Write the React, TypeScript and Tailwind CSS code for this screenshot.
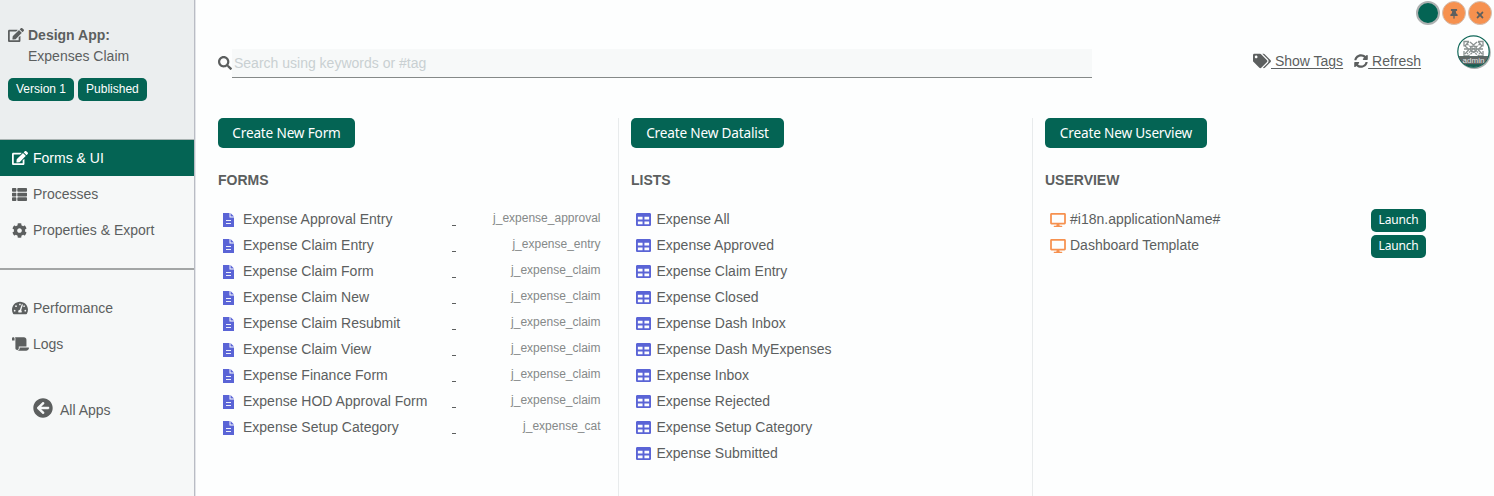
import type { ReactNode } from "react";
import {
  FaArrowCircleLeft,
  FaCog,
  FaDesktop,
  FaEdit,
  FaScroll,
  FaSearch,
  FaSyncAlt,
  FaTable,
  FaTachometerAlt,
  FaTags,
  FaThList,
  FaThumbtack,
  FaTimes,
} from "react-icons/fa";

const forms = [
  ["Expense Approval Entry", "j_expense_approval"],
  ["Expense Claim Entry", "j_expense_entry"],
  ["Expense Claim Form", "j_expense_claim"],
  ["Expense Claim New", "j_expense_claim"],
  ["Expense Claim Resubmit", "j_expense_claim"],
  ["Expense Claim View", "j_expense_claim"],
  ["Expense Finance Form", "j_expense_claim"],
  ["Expense HOD Approval Form", "j_expense_claim"],
  ["Expense Setup Category", "j_expense_cat"],
];

const lists = [
  "Expense All",
  "Expense Approved",
  "Expense Claim Entry",
  "Expense Closed",
  "Expense Dash Inbox",
  "Expense Dash MyExpenses",
  "Expense Inbox",
  "Expense Rejected",
  "Expense Setup Category",
  "Expense Submitted",
];

const userviews = ["#i18n.applicationName#", "Dashboard Template"];

function Badge({ children }: { children: ReactNode }) {
  return (
    <span className="flex h-[23px] items-center rounded-[5px] bg-[#046454] px-2 pb-px text-xs text-white">
      {children}
    </span>
  );
}

function NavItem({ icon, label, active = false }: { icon: ReactNode; label: string; active?: boolean }) {
  return (
    <a
      className={
        active
          ? "flex h-9 items-center bg-[#046454] pl-[11px] text-white"
          : "flex h-9 items-center pl-[11px]"
      }
    >
      <span className="flex w-[22px] items-center pl-px text-[15px]">{icon}</span>
      {label}
    </a>
  );
}

function CreateButton({ label, width }: { label: string; width: string }) {
  return (
    <button
      className={`${width} flex h-[30px] items-center justify-center rounded-[5px] bg-[#046454] font-['Noto_Sans',sans-serif] text-[13.6px] tracking-[-0.17px] whitespace-nowrap text-white`}
    >
      {label}
    </button>
  );
}

function Heading({ children }: { children: ReactNode }) {
  return <h2 className="mt-[22px] text-sm leading-5 font-bold">{children}</h2>;
}

function FormIcon() {
  return (
    <svg viewBox="0 0 11 14" className="h-[14px] w-[11px]">
      <path d="M0 0h6.5v4.4H11V14H0z" fill="#5a64d6" />
      <path d="M7.5 0 11 3.5H7.5z" fill="#5a64d6" />
      <path d="M3 7.5h5M3 10.5h5" stroke="#eef0fb" strokeWidth="1.1" />
    </svg>
  );
}

function Sidebar() {
  return (
    <aside className="flex w-[195px] shrink-0 flex-col border-r border-[#b9bcc4] bg-[#f6f8f8] shadow-[1px_0_0_#e3e5e9]">
      <header className="h-[140px] border-b border-[#a9b3b2] bg-[#ebeeef] pt-6 pl-2">
        <div className="flex h-[21px] items-center font-bold">
          <FaEdit className="mr-1 size-4" />
          Design App:
        </div>
        <div className="flex h-[21px] items-center pl-5">Expenses Claim</div>
        <div className="mt-3 flex gap-1">
          <Badge>Version 1</Badge>
          <Badge>Published</Badge>
        </div>
      </header>
      <nav className="h-[130px] border-b-2 border-[#a3a6a6]">
        <NavItem icon={<FaEdit className="size-4" />} label="Forms & UI" active />
        <NavItem icon={<FaThList />} label="Processes" />
        <NavItem icon={<FaCog />} label="Properties & Export" />
      </nav>
      <nav className="pt-5">
        <NavItem icon={<FaTachometerAlt className="size-4" />} label="Performance" />
        <NavItem icon={<FaScroll className="h-4 w-[17px]" />} label="Logs" />
      </nav>
      <a className="mt-9 flex h-[22px] items-center pl-[33px]">
        <FaArrowCircleLeft className="mr-[7px] mb-0.5 size-5" />
        <span className="mt-0.5">All Apps</span>
      </a>
    </aside>
  );
}

function Avatar() {
  return (
    <svg viewBox="0 0 34 34" className="size-[34px]">
      <defs>
        <clipPath id="avatar-disc">
          <circle cx="16.5" cy="16.5" r="15.5" />
        </clipPath>
      </defs>
      <circle cx="17.4" cy="17.6" r="16.4" fill="#a9acac" />
      <circle cx="16.5" cy="16.5" r="15.7" fill="#fff" stroke="#12695a" strokeWidth="1.2" />
      <g clipPath="url(#avatar-disc)">
        <g fill="none" stroke="#8b9291" strokeWidth="1.3">
          <path d="M7 11.5V6.500h5M21 6.500h5v5M7 16v5h5M21 21h5v-5M12 6.500 8 11l4 3.500L8 19M21 6.500 25 11l-4 3.500 4 4.500M13 7l3.500 3L20 7M7 14h19" />
          <circle cx="16.5" cy="14" r="3" />
          <path d="m11 21 5.500-4 5.500 4M10 9l13 10M23 9 10 19" strokeDasharray="2 1" />
        </g>
        <rect y="21.2" width="34" height="13" fill="#165f52" />
        <rect x="1" y="21.2" width="31" height="8" fill="#616665" />
        <text x="16.5" y="28.4" textAnchor="middle" fontFamily="Liberation Sans, sans-serif" fontSize="8" fill="#e2e6e6">
          admin
        </text>
      </g>
    </svg>
  );
}

export default function App() {
  return (
    <div className="relative flex h-[496px] w-[1494px] overflow-hidden bg-[#fdfefe] font-['Liberation_Sans',Arial,sans-serif] text-sm text-[#5c5f5f]">
      <Sidebar />
      <main className="flex grow flex-col pl-[23px]">
        <div className="flex h-[118px] items-start">
          <label className="mt-[49px] flex items-start">
            <FaSearch className="mt-[7px] size-[14px]" />
            <input
              placeholder="Search using keywords or #tag"
              className="h-[29px] w-[860px] border-b border-[#858988] bg-[#f7f9f9] pl-0.5 text-sm outline-none placeholder:text-[#c9d0d2]"
            />
          </label>
          <div className="mt-[51px] ml-[161px] flex h-5 gap-[11px] whitespace-pre">
            <a className="flex items-center">
              <FaTags className="mb-px h-4 w-[18px]" />
              <span className="underline underline-offset-2"> Show Tags</span>
            </a>
            <a className="flex items-center">
              <FaSyncAlt className="mb-px size-[14px]" />
              <span className="underline underline-offset-2"> Refresh</span>
            </a>
          </div>
        </div>
        <div className="flex grow">
          <section className="w-[401px] border-r border-[#e8ebec]">
            <CreateButton label="Create New Form" width="w-[137px]" />
            <Heading>FORMS</Heading>
            <ul className="mt-4">
              {forms.map(([name, id]) => (
                <li key={name} className="flex h-[26px] items-center">
                  <span className="flex w-[25px] pt-0.5 pl-[5px]">
                    <FormIcon />
                  </span>
                  <span className="w-[209px]">{name}</span>
                  <span className="mt-[12px] h-px w-1 bg-[#5c5f5f]" />
                  <span className="mb-[3px] w-[144.5px] text-right text-xs text-[#858989]">{id}</span>
                </li>
              ))}
            </ul>
          </section>
          <section className="w-[414px] border-r border-[#e8ebec] pl-3">
            <CreateButton label="Create New Datalist" width="w-[153px]" />
            <Heading>LISTS</Heading>
            <ul className="mt-4">
              {lists.map((name) => (
                <li key={name} className="flex h-[26px] items-center">
                  <span className="flex w-[25.5px] pt-px pl-[5px]">
                    <FaTable className="size-[15px] text-[#5a64d6]" />
                  </span>
                  {name}
                </li>
              ))}
            </ul>
          </section>
          <section className="w-[393px] pl-3">
            <CreateButton label="Create New Userview" width="w-[162px]" />
            <Heading>USERVIEW</Heading>
            <ul className="mt-4">
              {userviews.map((name) => (
                <li key={name} className="flex h-[26px] items-center">
                  <span className="flex w-[25px] pt-0.5 pl-[5px]">
                    <FaDesktop className="h-[14px] w-4 text-[#f6914f]" />
                  </span>
                  {name}
                  <button className="mt-[3px] ml-auto flex h-[23px] w-[55px] items-center justify-center rounded-[5px] bg-[#046454] pb-px font-['Noto_Sans',sans-serif] text-[12px] tracking-[-0.2px] text-white">
                    Launch
                  </button>
                </li>
              ))}
            </ul>
          </section>
        </div>
      </main>
      <div className="absolute top-px right-[2px] flex gap-[2px]">
        <span className="size-6 rounded-full border-2 border-[#adb1b1] bg-[#046454]" />
        <span className="flex size-6 items-center justify-center rounded-full border border-[#d3c0b4] bg-[#f6914f]">
          <FaThumbtack className="mt-0.5 size-[10px]" />
        </span>
        <span className="flex size-6 items-center justify-center rounded-full border border-[#d3c0b4] bg-[#f6914f]">
          <FaTimes className="mt-1 size-[10px]" />
        </span>
      </div>
      <div className="absolute top-[35px] right-[3px]">
        <Avatar />
      </div>
    </div>
  );
}
